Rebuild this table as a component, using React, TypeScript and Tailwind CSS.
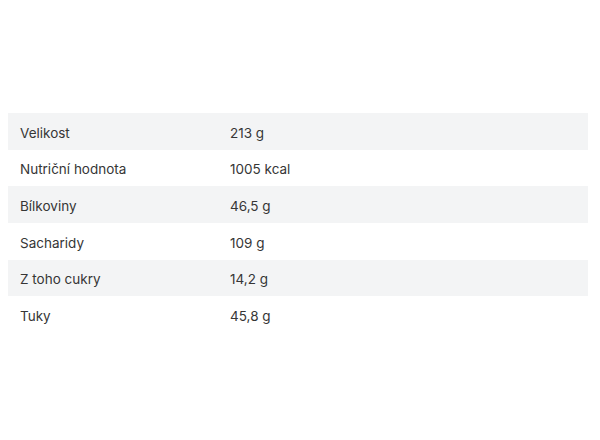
const rows: [string, string][] = [
  ["Velikost", "213 g"],
  ["Nutriční hodnota", "1005 kcal"],
  ["Bílkoviny", "46,5 g"],
  ["Sacharidy", "109 g"],
  ["Z toho cukry", "14,2 g"],
  ["Tuky", "45,8 g"],
];

export default function App() {
  return (
    <div className="h-[440px] w-[600px] bg-white pl-2 pr-3 pt-[113px] font-['Inter',sans-serif] text-[13.5px] text-[#363636]">
      <div className="flex flex-col">
        {rows.map(([label, value], index) => (
          <div
            key={label}
            className={`flex h-[36.7px] items-center pt-[3px] ${
              index % 2 === 0 ? "bg-[#f3f4f5]" : "bg-white"
            }`}
          >
            <div className="w-[222px] pl-3">{label}</div>
            <div>{value}</div>
          </div>
        ))}
      </div>
    </div>
  );
}
